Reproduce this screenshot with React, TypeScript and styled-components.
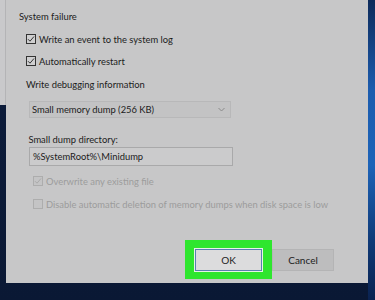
import * as React from 'react';
import styled, { createGlobalStyle } from 'styled-components';

const GlobalStyle = createGlobalStyle`
  html, body {
    margin: 0;
    padding: 0;
    width: 375px;
    height: 300px;
    overflow: hidden;
  }
  body {
    font-family: Lato, "Noto Sans", sans-serif;
  }
`;

const Desktop = styled.div`
  width: 375px;
  height: 300px;
  background: linear-gradient(180deg, #0d1d3d 0%, #0a1834 100%);
  display: flex;
  overflow: hidden;
`;

const LeftEdge = styled.div`
  width: 6px;
  display: flex;
  flex-direction: column;
`;

const BehindWindow = styled.div`
  height: 105px;
  background: #c9c9cb;
  border-right: 1px solid #b4b4b6;
`;

const RightEdge = styled.div`
  width: 7px;
  background: linear-gradient(180deg, #0d2a5a 0%, #1c5cae 30%, #1d63b8 55%, #0f3a78 80%, #0a2250 100%);
`;

const Dialog = styled.div`
  width: 362px;
  height: 283px;
  background: #c7c7c8;
  box-sizing: border-box;
  padding: 10px 0 0 13px;
  display: flex;
  flex-direction: column;
  color: #1c1c1c;
  font-size: 9.4px;
  white-space: nowrap;
`;

const GroupTitle = styled.div`
  height: 14px;
  line-height: 14px;
`;

const Indented = styled.div`
  padding-left: 7px;
  display: flex;
  flex-direction: column;
`;

const CheckRow = styled.label<{ $disabled?: boolean; $top: number }>`
  display: flex;
  align-items: center;
  gap: 3px;
  margin-top: ${p => p.$top}px;
  height: 14px;
  color: ${p => (p.$disabled ? '#9c9c9c' : '#1c1c1c')};
`;

const Box = styled.span<{ $disabled?: boolean }>`
  flex-shrink: 0;
  width: 10px;
  height: 10px;
  box-sizing: border-box;
  border: 1px solid ${p => (p.$disabled ? '#adadad' : '#333')};
  background: ${p => (p.$disabled ? '#c4c4c5' : '#cfcfd0')};
  display: flex;
  align-items: center;
  justify-content: center;
`;

const Label = styled.div<{ $top: number }>`
  margin-top: ${p => p.$top}px;
  height: 14px;
  line-height: 14px;
`;

const Select = styled.div`
  margin-top: 9px;
  margin-left: 3px;
  width: 202px;
  height: 17px;
  box-sizing: border-box;
  border: 1px solid #b8b8b9;
  background: #c3c3c4;
  display: flex;
  align-items: center;
  justify-content: space-between;
  padding: 0 5px 0 2px;
`;

const Input = styled.div`
  margin-left: 3px;
  width: 204px;
  height: 19px;
  box-sizing: border-box;
  border: 1px solid #a9a9aa;
  background: #cbcbcc;
  display: flex;
  align-items: center;
  padding-left: 3px;
`;

const Buttons = styled.div`
  margin-top: auto;
  margin-bottom: 4px;
  margin-left: 166px;
  display: flex;
  align-items: center;
`;

const Highlight = styled.div`
  width: 87px;
  height: 39px;
  box-sizing: border-box;
  background: #2ee62e;
  display: flex;
  align-items: center;
  justify-content: center;
`;

const Button = styled.div<{ $primary?: boolean }>`
  width: ${p => (p.$primary ? 67 : 62)}px;
  height: 22px;
  box-sizing: border-box;
  border: 1px solid ${p => (p.$primary ? '#5a7fb0' : '#b4b4b5')};
  background: ${p => (p.$primary ? '#dcdcdd' : '#bdbdbe')};
  box-shadow: ${p => (p.$primary ? '0 0 0 1px #e6f4e6' : 'none')};
  display: flex;
  align-items: center;
  justify-content: center;
  font-size: 10px;
  color: #1c1c1c;
`;

const Check = ({ color }: { color: string }) => (
  <svg width="8" height="8" viewBox="0 0 8 8">
    <path d="M1 4.2 L3 6.2 L7 1.5" fill="none" stroke={color} strokeWidth="1" />
  </svg>
);

const Chevron = () => (
  <svg width="7" height="5" viewBox="0 0 7 5">
    <path d="M0.5 1 L3.5 4 L6.5 1" fill="none" stroke="#8a8a8a" strokeWidth="1" />
  </svg>
);

export default function App() {
  return (
    <>
      <GlobalStyle />
      <Desktop>
        <LeftEdge>
          <BehindWindow />
        </LeftEdge>
        <Dialog>
          <GroupTitle>System failure</GroupTitle>
          <Indented>
            <CheckRow $top={8}>
              <Box><Check color="#333" /></Box>
              Write an event to the system log
            </CheckRow>
            <CheckRow $top={8}>
              <Box><Check color="#333" /></Box>
              Automatically restart
            </CheckRow>
            <Label $top={10}>Write debugging information</Label>
            <Select>
              <span>Small memory dump (256 KB)</span>
              <Chevron />
            </Select>
            <Label $top={15}>&nbsp;Small dump directory:</Label>
            <Input>%SystemRoot%\Minidump</Input>
            <Indented>
              <CheckRow $disabled $top={8}>
                <Box $disabled><Check color="#aaa" /></Box>
                Overwrite any existing file
              </CheckRow>
              <CheckRow $disabled $top={9}>
                <Box $disabled />
                Disable automatic deletion of memory dumps when disk space is low
              </CheckRow>
            </Indented>
          </Indented>
          <Buttons>
            <Highlight>
              <Button $primary>OK</Button>
            </Highlight>
            <Button>Cancel</Button>
          </Buttons>
        </Dialog>
        <RightEdge />
      </Desktop>
    </>
  );
}
